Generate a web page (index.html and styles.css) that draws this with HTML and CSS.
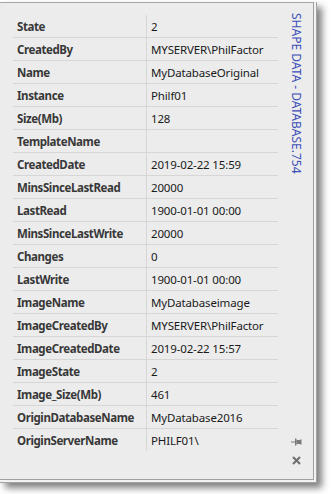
FILE: index.html
```html
<!DOCTYPE html>
<html>
<head>
<meta charset="utf-8">
<link rel="stylesheet" href="styles.css">
</head>
<body>
<div class="frame">
  <div class="panel">
    <div class="table">
      <div class="row"><div class="k">State</div><div class="v">2</div></div>
      <div class="row"><div class="k">CreatedBy</div><div class="v">MYSERVER\PhilFactor</div></div>
      <div class="row"><div class="k">Name</div><div class="v">MyDatabaseOriginal</div></div>
      <div class="row"><div class="k">Instance</div><div class="v">Philf01</div></div>
      <div class="row"><div class="k">Size(Mb)</div><div class="v">128</div></div>
      <div class="row"><div class="k">TemplateName</div><div class="v"></div></div>
      <div class="row"><div class="k">CreatedDate</div><div class="v">2019-02-22 15:59</div></div>
      <div class="row"><div class="k">MinsSinceLastRead</div><div class="v">20000</div></div>
      <div class="row"><div class="k">LastRead</div><div class="v">1900-01-01 00:00</div></div>
      <div class="row"><div class="k">MinsSinceLastWrite</div><div class="v">20000</div></div>
      <div class="row"><div class="k">Changes</div><div class="v">0</div></div>
      <div class="row"><div class="k">LastWrite</div><div class="v">1900-01-01 00:00</div></div>
      <div class="row"><div class="k">ImageName</div><div class="v">MyDatabaseimage</div></div>
      <div class="row"><div class="k">ImageCreatedBy</div><div class="v">MYSERVER\PhilFactor</div></div>
      <div class="row"><div class="k">ImageCreatedDate</div><div class="v">2019-02-22 15:57</div></div>
      <div class="row"><div class="k">ImageState</div><div class="v">2</div></div>
      <div class="row"><div class="k">Image_Size(Mb)</div><div class="v">461</div></div>
      <div class="row"><div class="k">OriginDatabaseName</div><div class="v">MyDatabase2016</div></div>
      <div class="row"><div class="k">OriginServerName</div><div class="v">PHILF01\</div></div>
    </div>
    <div class="side">
      <div class="title">SHAPE DATA - DATABASE.754</div>
      <div class="icons">
        <svg class="pin" width="11" height="8" viewBox="0 0 11 8">
          <rect x="0" y="3.5" width="4" height="1" fill="#7a7a7a"/>
          <rect x="4" y="0.5" width="1.5" height="7" fill="#7a7a7a"/>
          <rect x="5.5" y="2" width="4" height="4" fill="#7a7a7a"/>
          <rect x="9" y="1.5" width="1.5" height="5" fill="#7a7a7a"/>
        </svg>
        <svg class="close" width="9" height="9" viewBox="0 0 9 9">
          <path d="M1 1 L8 8 M8 1 L1 8" stroke="#6e6e6e" stroke-width="2"/>
        </svg>
      </div>
    </div>
  </div>
</div>
</body>
</html>
```

FILE: styles.css
```css
html, body {
  margin: 0;
  padding: 0;
  background: #ffffff;
}
body {
  width: 331px;
  height: 494px;
  overflow: hidden;
  font-family: "Noto Sans", "Open Sans", sans-serif;
}
.frame {
  margin-top: 2px;
  width: 314px;
  height: 478px;
  padding: 0 2px 2px 0;
  background: #f2f2f2;
  border-right: 1px solid #a3a3a3;
  border-bottom: 1px solid #a3a3a3;
  box-shadow: 5px 5px 7px rgba(0, 0, 0, 0.5);
}
.panel {
  box-sizing: border-box;
  width: 314px;
  height: 478px;
  background: #ececec;
  border-top: 1px solid #a6a6a6;
  border-right: 1px solid #a0a0a0;
  border-bottom: 1px solid #a0a0a0;
  display: flex;
}
.table {
  margin: 12px 0 0 13px;
  width: 265px;
  display: flex;
  flex-direction: column;
  align-self: flex-start;
}
.row {
  display: grid;
  grid-template-columns: 134px 131px;
  height: 22px;
  border-bottom: 1px solid #d6d6d6;
}
.row:last-child {
  border-bottom: none;
}
.k, .v {
  display: flex;
  align-items: center;
  font-size: 11.5px;
  white-space: nowrap;
  overflow: hidden;
}
.k {
  padding-left: 4px;
  font-weight: bold;
  color: #383838;
  letter-spacing: -0.4px;
  border-right: 1px solid #d6d6d6;
}
.v {
  padding-left: 4px;
  color: #1a1a1a;
  letter-spacing: -0.15px;
}
.side {
  flex: 1;
  display: flex;
  flex-direction: column;
  align-items: center;
  padding-top: 10px;
  padding-bottom: 14px;
}
.title {
  writing-mode: vertical-rl;
  font-size: 12px;
  color: #3b4fb8;
  margin-left: 2px;
}
.icons {
  margin-top: auto;
  display: flex;
  flex-direction: column;
  align-items: center;
  gap: 10px;
  margin-left: 2px;
}
```
